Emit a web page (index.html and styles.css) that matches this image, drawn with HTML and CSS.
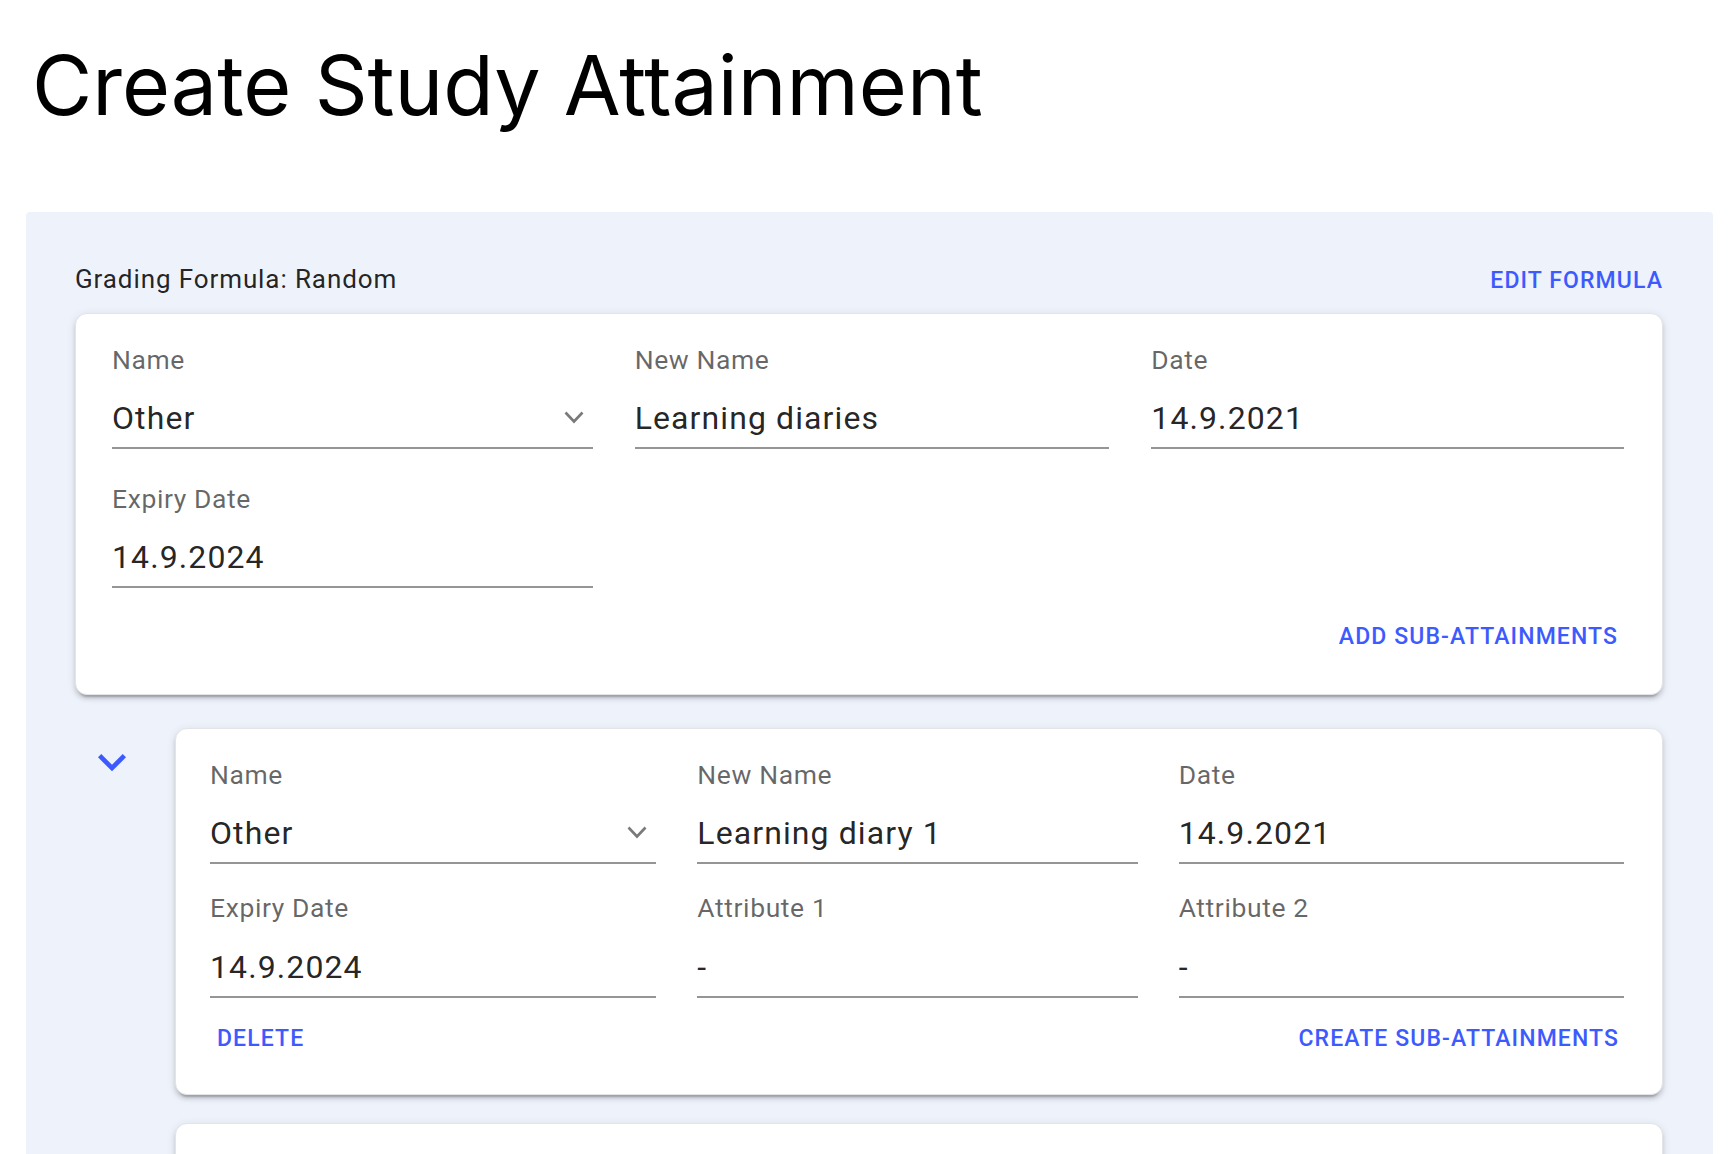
FILE: index.html
```html
<!DOCTYPE html>
<html lang="en">
<head>
<meta charset="utf-8">
<title>Create Study Attainment</title>
<link rel="stylesheet" href="styles.css">
</head>
<body>
<h1 class="title">Create Study Attainment</h1>
<section class="panel">
  <div class="panel-head">
    <span class="formula">Grading Formula: Random</span>
    <button class="text-btn">EDIT FORMULA</button>
  </div>

  <div class="card card-main">
    <div class="fields">
      <div class="field">
        <div class="label">Name</div>
        <div class="value">
          <span>Other</span>
          <svg class="select-icon" viewBox="0 0 20 13" width="20" height="13"><polyline points="1.5,1.5 10,10.5 18.5,1.5" fill="none" stroke="#7a7a7a" stroke-width="2.6"/></svg>
        </div>
      </div>
      <div class="field">
        <div class="label">New Name</div>
        <div class="value"><span>Learning diaries</span></div>
      </div>
      <div class="field">
        <div class="label">Date</div>
        <div class="value"><span>14.9.2021</span></div>
      </div>
      <div class="field">
        <div class="label">Expiry Date</div>
        <div class="value"><span>14.9.2024</span></div>
      </div>
    </div>
    <div class="actions actions-end">
      <button class="text-btn">ADD SUB-ATTAINMENTS</button>
    </div>
  </div>

  <div class="sub-row">
    <div class="gutter">
      <svg class="expand-icon" viewBox="0 0 24 24" width="56" height="56"><path d="M16.59 8.59 12 13.17 7.41 8.59 6 10l6 6 6-6z" fill="#3d5afe"/></svg>
    </div>
    <div class="card card-sub">
      <div class="fields">
        <div class="field">
          <div class="label">Name</div>
          <div class="value">
            <span>Other</span>
            <svg class="select-icon" viewBox="0 0 20 13" width="20" height="13"><polyline points="1.5,1.5 10,10.5 18.5,1.5" fill="none" stroke="#7a7a7a" stroke-width="2.6"/></svg>
          </div>
        </div>
        <div class="field">
          <div class="label">New Name</div>
          <div class="value"><span>Learning diary 1</span></div>
        </div>
        <div class="field">
          <div class="label">Date</div>
          <div class="value"><span>14.9.2021</span></div>
        </div>
        <div class="field">
          <div class="label">Expiry Date</div>
          <div class="value"><span>14.9.2024</span></div>
        </div>
        <div class="field">
          <div class="label">Attribute 1</div>
          <div class="value"><span>-</span></div>
        </div>
        <div class="field">
          <div class="label">Attribute 2</div>
          <div class="value"><span>-</span></div>
        </div>
      </div>
      <div class="actions actions-split">
        <button class="text-btn">DELETE</button>
        <button class="text-btn">CREATE SUB-ATTAINMENTS</button>
      </div>
    </div>
  </div>

  <div class="sub-row sub-row-next">
    <div class="gutter"></div>
    <div class="card card-sub card-stub"></div>
  </div>
</section>
</body>
</html>
```

FILE: styles.css
```css
* {
  box-sizing: border-box;
}

html, body {
  margin: 0;
  padding: 0;
  background: #ffffff;
}

body {
  font-family: Roboto, "Liberation Sans", sans-serif;
  color: rgba(0, 0, 0, 0.87);
  overflow: hidden;
}

.title {
  margin: 35px 0 0 32px;
  font-family: Inter, "Liberation Sans", sans-serif;
  font-weight: 400;
  font-size: 82.5px;
  line-height: 100px;
  height: 100px;
  color: #000;
  letter-spacing: 0;
}

.panel {
  margin: 77px 23px 0 26px;
  background: #eef2fa;
  border-radius: 4px 4px 0 0;
  padding: 52px 50px 40px 49px;
  min-height: 1000px;
}

.panel-head {
  display: flex;
  justify-content: space-between;
  align-items: baseline;
  height: 49px;
}

.formula {
  font-size: 26px;
  line-height: 30px;
  letter-spacing: 0.9px;
  color: rgba(0, 0, 0, 0.87);
}

.text-btn {
  background: none;
  border: none;
  padding: 0;
  margin: 0;
  font-family: Roboto, "Liberation Sans", sans-serif;
  font-weight: 500;
  font-size: 23px;
  line-height: 28px;
  letter-spacing: 1.1px;
  color: #3d5afe;
  cursor: pointer;
}

.card {
  background: #fff;
  border-radius: 12px;
  border: 1px solid #e2e4e8;
  box-shadow: 0 6px 2px -4px rgba(0, 0, 0, 0.2), 0 4px 4px 0 rgba(0, 0, 0, 0.12), 0 2px 10px 0 rgba(0, 0, 0, 0.1);
}

.card-main {
  padding: 30px 38px 43px 36px;
}

.fields {
  display: grid;
  grid-template-columns: 480fr 474fr 472fr;
  column-gap: 42px;
  row-gap: 34px;
}

.card-sub .fields {
  grid-template-columns: 447fr 441fr 446fr;
  column-gap: 41px;
  row-gap: 28px;
}

.label {
  font-size: 26.5px;
  line-height: 32px;
  letter-spacing: 0.6px;
  color: rgba(0, 0, 0, 0.6);
}

.value {
  display: flex;
  justify-content: space-between;
  align-items: center;
  margin-top: 23px;
  height: 50px;
  padding-bottom: 10px;
  border-bottom: 2px solid #959595;
  font-size: 32px;
  line-height: 38px;
  letter-spacing: 1.1px;
  color: rgba(0, 0, 0, 0.87);
}

.card-sub .field:nth-child(n+4) .value {
  margin-top: 24px;
}

.select-icon {
  margin-right: 9px;
  margin-top: -2px;
}

.actions {
  display: flex;
  margin-top: 35px;
}

.actions-end {
  justify-content: flex-end;
  padding-right: 6px;
}

.actions-split {
  justify-content: space-between;
  margin-top: 27px;
  padding-left: 7px;
  padding-right: 5px;
}

.sub-row {
  display: flex;
  margin-top: 33px;
}

.sub-row-next {
  margin-top: 28px;
}

.gutter {
  width: 100px;
  flex: none;
  padding-left: 9px;
  padding-top: 6px;
}

.expand-icon {
  display: block;
}

.card-sub {
  flex: 1;
  padding: 30px 38px 41px 34px;
}

.card-stub {
  height: 300px;
}
```
